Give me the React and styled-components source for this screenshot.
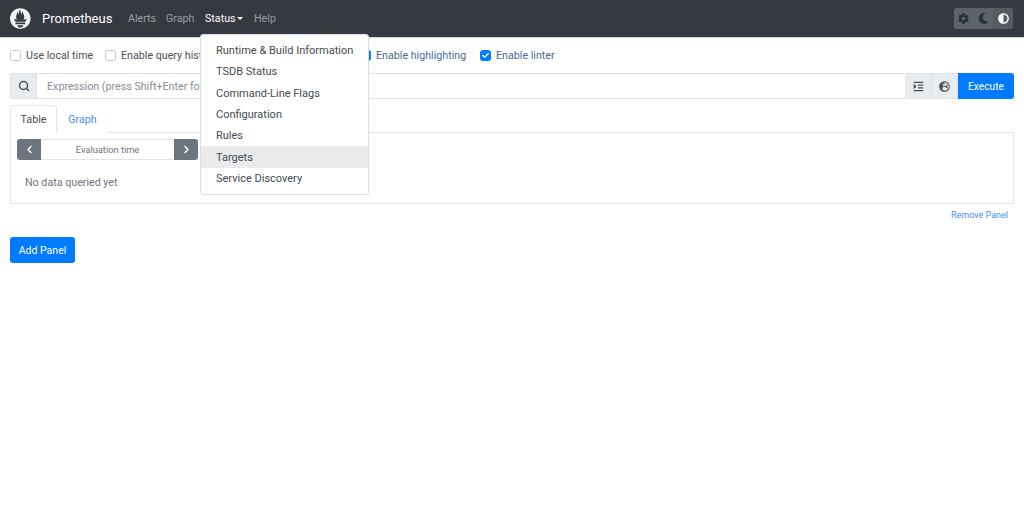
import React from 'react'
import styled, { createGlobalStyle } from 'styled-components'
import { Search } from 'lucide-react'
import {
  FaAdjust,
  FaChevronLeft,
  FaChevronRight,
  FaCheck,
  FaCog,
  FaGlobeEurope,
  FaIndent,
  FaMoon
} from 'react-icons/fa'

const GlobalStyle = createGlobalStyle`
  html, body {
    margin: 0;
    padding: 0;
    background: #fff;
  }
  body {
    font-family: Roboto, 'Open Sans', sans-serif;
    font-size: 10.7px;
    color: #212529;
    white-space: nowrap;
  }
  * {
    box-sizing: border-box;
  }
`

const Page = styled.div`
  position: relative;
  width: 1024px;
  height: 517px;
  overflow: hidden;
`
const Navbar = styled.nav`
  display: flex;
  align-items: center;
  height: 38px;
  padding: 0 10px;
  background: #343a40;
  border-bottom: 1px solid #d8d8d8;
`
const Logo = styled.svg`
  width: 21px;
  height: 21px;
  margin-right: 11px;
  fill: #f4f5f5;
`
const Brand = styled.span`
  width: 86px;
  font-size: 13px;
  color: #fff;
`
const NavItem = styled.span`
  display: flex;
  align-items: center;
  width: ${props => props.w}px;
  color: ${props => (props.active ? '#fff' : 'rgba(255, 255, 255, 0.5)')};
`
const Caret = styled.i`
  margin-left: 1.5px;
  border-top: 3.5px solid #fff;
  border-left: 3.5px solid transparent;
  border-right: 3.5px solid transparent;
`
const ThemeToggle = styled.div`
  display: flex;
  margin-left: auto;
  margin-right: 1px;
  height: 21px;
  border-radius: 2.5px;
  overflow: hidden;
`
const ThemeButton = styled.span`
  display: flex;
  align-items: center;
  justify-content: center;
  width: ${props => props.w}px;
  font-size: 11px;
  background: ${props => (props.active ? '#545b62' : '#5c636a')};
  color: ${props => (props.active ? '#fff' : '#2e3338')};
`
const Content = styled.main`
  padding: 0 10px;
`
const Options = styled.div`
  display: flex;
  align-items: center;
  height: 35px;
`
const Option = styled.label`
  display: flex;
  align-items: center;
  width: ${props => props.w}px;
  color: ${props => (props.checked ? '#476a9d' : '#495057')};
`
const Checkbox = styled.span`
  display: flex;
  align-items: center;
  justify-content: center;
  flex: none;
  width: 11px;
  height: 11px;
  margin-right: 5px;
  font-size: 7px;
  color: #fff;
  border-radius: 2.5px;
  border: 1px solid ${props => (props.checked ? '#007bff' : '#c4c9ce')};
  background: ${props => (props.checked ? '#007bff' : '#fff')};
`
const ExpressionRow = styled.div`
  display: flex;
  height: 26px;
`
const Addon = styled.span`
  display: flex;
  align-items: center;
  justify-content: center;
  width: ${props => props.w}px;
  font-size: 11px;
  color: #495057;
  background: #e9ecef;
  border: 1px solid #dee2e6;
  border-left-width: ${props => (props.first ? 1 : 0)}px;
  border-radius: ${props => (props.first ? '3px 0 0 3px' : '0')};
`
const Expression = styled.div`
  display: flex;
  align-items: center;
  flex: 1;
  padding-left: 10px;
  color: #868e96;
  border: 1px solid #dfe3e7;
  border-left: 0;
  border-right: 0;
`
const PrimaryButton = styled.button`
  padding: 0;
  width: ${props => props.w}px;
  height: 26px;
  font: inherit;
  font-size: ${props => props.size}px;
  color: #fff;
  background: #007bff;
  border: 0;
  border-radius: ${props => (props.end ? '0 3px 3px 0' : '3px')};
`
const AddPanelButton = styled(PrimaryButton)`
  padding-top: 1px;
`
const Tabs = styled.div`
  display: flex;
  margin-top: 6px;
  height: 28px;
`
const Tab = styled.span`
  display: flex;
  align-items: center;
  justify-content: center;
  width: ${props => props.w}px;
  color: ${props => (props.active ? '#495057' : '#3f90f5')};
  border: 1px solid ${props => (props.active ? '#e3e6e9' : 'transparent')};
  border-bottom: 0;
  border-radius: 3px 3px 0 0;
  background: #fff;
  position: relative;
  z-index: 1;
`
const TabPanel = styled.section`
  margin-top: -1px;
  height: 72px;
  padding: 6px;
  border: 1px solid #e3e6e9;
`
const TimeInput = styled.div`
  display: flex;
  width: 181px;
  height: 21px;
`
const StepButton = styled.span`
  display: flex;
  align-items: center;
  justify-content: center;
  flex: none;
  width: 24px;
  font-size: 9px;
  color: #fff;
  background: #6c757d;
  border-radius: ${props => (props.right ? '0 3px 3px 0' : '3px 0 0 3px')};
`
const TimeValue = styled.div`
  display: flex;
  align-items: center;
  justify-content: center;
  flex: 1;
  font-size: 9.3px;
  color: #6c757d;
  border: 1px solid #e3e6e9;
  border-left: 0;
  border-right: 0;
`
const Empty = styled.div`
  margin-top: 16px;
  padding-left: 8px;
  color: #6c757d;
`
const RemoveRow = styled.div`
  display: flex;
  justify-content: flex-end;
  margin-top: 4px;
  padding-right: 6px;
  font-size: 9px;
  line-height: 14px;
  color: #3f90f5;
`
const AddRow = styled.div`
  margin-top: 15px;
`
const Dropdown = styled.ul`
  position: absolute;
  top: 34px;
  left: 200px;
  width: 169px;
  height: 161px;
  margin: 0;
  padding: 5px 0;
  list-style: none;
  background: #fff;
  border: 1px solid #dcdddf;
  border-radius: 3px;
`
const DropdownItem = styled.li`
  display: flex;
  align-items: center;
  height: 21.3px;
  padding-left: 15px;
  font-size: 11px;
  color: #454b50;
  background: ${props => (props.active ? '#eaeaec' : 'transparent')};
`

const links = [
  'Runtime & Build Information',
  'TSDB Status',
  'Command-Line Flags',
  'Configuration',
  'Rules',
  'Targets',
  'Service Discovery'
]

const App = () => (
  <Page>
    <GlobalStyle />
    <Navbar>
      <Logo viewBox="0 0 115.333 114">
        <path d="M56.667.667C25.372.667 0 26.036 0 57.332c0 31.295 25.372 56.666 56.667 56.666s56.666-25.371 56.666-56.666C113.333 26.036 87.961.667 56.667.667zm0 106.055c-8.904 0-16.123-5.948-16.123-13.283H72.79c0 7.334-7.219 13.283-16.123 13.283zM83.297 89.04H30.034v-9.658h53.264v9.658zm-.191-14.629H30.186c-.176-.203-.356-.403-.526-.609-5.452-6.62-6.736-10.076-7.983-13.598-.021-.116 6.611 1.355 11.314 2.413 0 0 2.42.56 5.958 1.205-3.397-3.982-5.414-9.044-5.414-14.218 0-11.359 8.712-21.285 5.569-29.308 3.059.249 6.331 6.456 6.552 16.161 3.252-4.494 4.613-12.701 4.613-17.733 0-5.21 3.433-11.262 6.867-11.469-3.061 5.045.793 9.37 4.219 20.099 1.285 4.03 1.121 10.812 2.113 15.113.329-8.933 1.865-21.967 7.532-26.467-2.5 5.667.37 12.758 2.333 16.167 3.167 5.5 5.087 9.667 5.087 17.548 0 5.284-1.951 10.259-5.242 14.148 3.742-.702 6.326-1.335 6.326-1.335l12.152-2.371c.001-.001-1.765 7.261-8.55 14.254z" />
      </Logo>
      <Brand>Prometheus</Brand>
      <NavItem w={38}>Alerts</NavItem>
      <NavItem w={39}>Graph</NavItem>
      <NavItem w={49} active>
        Status
        <Caret />
      </NavItem>
      <NavItem w={30}>Help</NavItem>
      <ThemeToggle>
        <ThemeButton w={19}>
          <FaCog />
        </ThemeButton>
        <ThemeButton w={20}>
          <FaMoon />
        </ThemeButton>
        <ThemeButton w={20} active>
          <FaAdjust />
        </ThemeButton>
      </ThemeToggle>
    </Navbar>
    <Content>
      <Options>
        <Option w={95}>
          <Checkbox />
          Use local time
        </Option>
        <Option w={255}>
          <Checkbox />
          Enable query history
        </Option>
        <Option w={120} checked>
          <Checkbox checked>
            <FaCheck />
          </Checkbox>
          Enable highlighting
        </Option>
        <Option w={100} checked>
          <Checkbox checked>
            <FaCheck />
          </Checkbox>
          Enable linter
        </Option>
      </Options>
      <ExpressionRow>
        <Addon w={27} first>
          <Search size={12} strokeWidth={3} />
        </Addon>
        <Expression>Expression (press Shift+Enter for newlines)</Expression>
        <Addon w={27}>
          <FaIndent />
        </Addon>
        <Addon w={26}>
          <FaGlobeEurope />
        </Addon>
        <PrimaryButton w={56} size={10.2} end>
          Execute
        </PrimaryButton>
      </ExpressionRow>
      <Tabs>
        <Tab w={47} active>
          Table
        </Tab>
        <Tab w={51}>Graph</Tab>
      </Tabs>
      <TabPanel>
        <TimeInput>
          <StepButton>
            <FaChevronLeft />
          </StepButton>
          <TimeValue>Evaluation time</TimeValue>
          <StepButton right>
            <FaChevronRight />
          </StepButton>
        </TimeInput>
        <Empty>No data queried yet</Empty>
      </TabPanel>
      <RemoveRow>Remove Panel</RemoveRow>
      <AddRow>
        <AddPanelButton w={65} size={10.5}>
          Add Panel
        </AddPanelButton>
      </AddRow>
    </Content>
    <Dropdown>
      {links.map(link => (
        <DropdownItem key={link} active={link === 'Targets'}>
          {link}
        </DropdownItem>
      ))}
    </Dropdown>
  </Page>
)

export default App
